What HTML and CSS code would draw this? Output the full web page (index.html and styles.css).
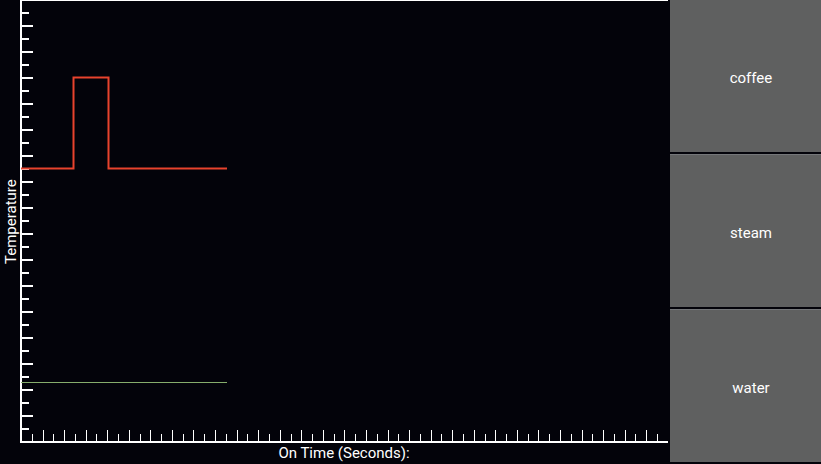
FILE: index.html
```html
<!DOCTYPE html>
<html lang="en">
<head>
  <meta charset="UTF-8">
  <meta name="viewport" content="width=device-width, initial-scale=1.0">
  <title>Brew Monitor</title>
  <link rel="stylesheet" href="styles.css">
</head>
<body>
  <main class="screen">
    <!-- Temperature chart -->
    <section class="chart">
      <div class="y-label">Temperature</div>
      <svg class="plot" id="plot" width="650" height="444" viewBox="0 0 650 444">
        <g id="ticks" fill="#ffffff"></g>
        <rect x="0" y="0" width="648" height="1" fill="#ffffff"/>
        <rect x="0" y="0" width="2" height="443" fill="#ffffff"/>
        <rect x="0" y="441" width="648" height="2" fill="#ffffff"/>
        <polyline class="line-temp" points="1,168.5 53.5,168.5 53.5,77.5 88.5,77.5 88.5,168.5 207,168.5"/>
        <line class="line-target" x1="1" y1="382.5" x2="207" y2="382.5"/>
      </svg>
      <div class="x-label">On Time (Seconds):</div>
    </section>

    <!-- Mode buttons -->
    <aside class="modes">
      <button class="mode" type="button">coffee</button>
      <button class="mode" type="button">steam</button>
      <button class="mode" type="button">water</button>
    </aside>
  </main>

  <script src="script.js"></script>
</body>
</html>
```

FILE: styles.css
```css
/* Global */
html, body {
  margin: 0;
  padding: 0;
  background-color: #03030a;
}

body {
  font-family: Roboto, 'Liberation Sans', sans-serif;
  color: #ffffff;
  width: 821px;
  height: 464px;
  overflow: hidden;
}

.screen {
  display: flex;
  height: 464px;
}

/* Chart area */
.chart {
  display: grid;
  grid-template-columns: 20px 650px;
  grid-template-rows: 444px 20px;
  width: 670px;
}

.y-label {
  display: flex;
  align-items: center;
  justify-content: center;
  writing-mode: vertical-rl;
  transform: rotate(180deg);
  font-size: 15px;
  padding-right: 2px;
}

.plot {
  display: block;
}

.line-temp {
  fill: none;
  stroke: #e8432d;
  stroke-width: 2;
}

.line-target {
  stroke: #86ad6c;
  stroke-width: 1;
}

.x-label {
  grid-column: 2;
  text-align: center;
  font-size: 15px;
  line-height: 18px;
  padding-right: 2px;
}

/* Buttons column */
.modes {
  display: flex;
  flex-direction: column;
  gap: 2px;
  width: 151px;
  padding-bottom: 2px;
}

.mode {
  flex: 1;
  border: none;
  margin: 0;
  background-color: #5f6060;
  color: #ffffff;
  font-family: Roboto, 'Liberation Sans', sans-serif;
  font-size: 15px;
  padding: 4px 0 0 11px;
  cursor: pointer;
}

.mode + .mode {
  border-top: 1px solid #75777a;
}
```

FILE: script.js
```js
// Draw axis ticks on the plot
const ticks = document.getElementById("ticks");
const NS = "http://www.w3.org/2000/svg";

const addRect = (x, y, w, h) => {
  const r = document.createElementNS(NS, "rect");
  r.setAttribute("x", x);
  r.setAttribute("y", y);
  r.setAttribute("width", w);
  r.setAttribute("height", h);
  ticks.appendChild(r);
};

// y axis: every 13px, long on even steps
for (let k = 1; k <= 33; k++) {
  const len = k % 2 === 0 ? 11 : 7;
  addRect(2, 13 * k - 1, len, 2);
}

// x axis: 60 steps across the plot
for (let k = 1; k <= 59; k++) {
  const x = Math.round(1 + 10.78 * k);
  const len = k % 2 === 0 ? 11 : 7;
  addRect(x, 441 - len, 1, len);
}
```
